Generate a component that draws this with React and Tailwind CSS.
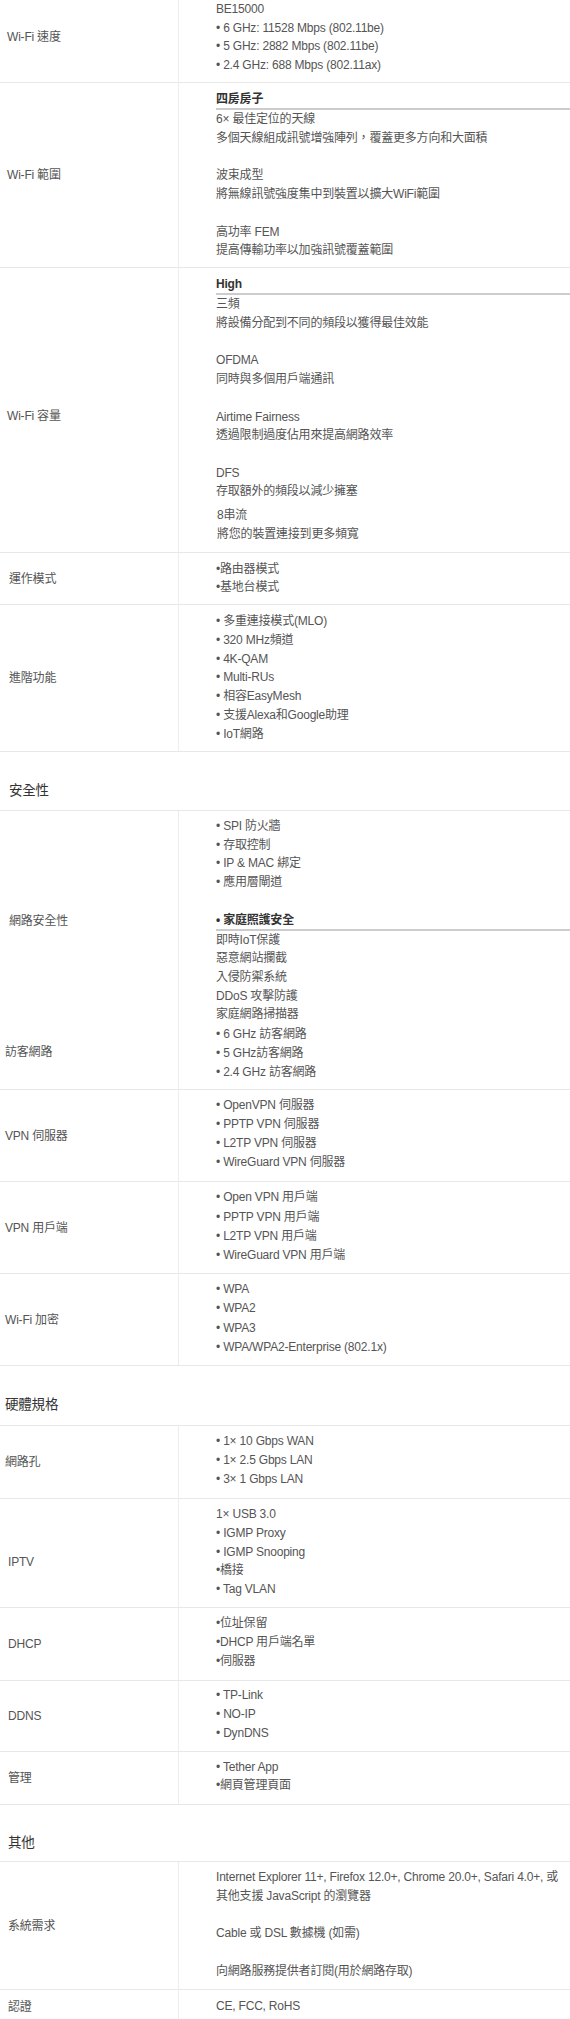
const rows = [
  {
    label: "Wi-Fi 速度",
    lpad: "pl-[7px]",
    pad: "pt-[8px] pb-[7.5px]",
    lh: "leading-[18.7px]",
    lines: [
      "BE15000",
      "• 6 GHz: 11528 Mbps (802.11be)",
      "• 5 GHz: 2882 Mbps (802.11be)",
      "• 2.4 GHz: 688 Mbps (802.11ax)",
    ],
  },
  {
    label: "Wi-Fi 範圍",
    lpad: "pl-[7px]",
    pad: "pt-[7px] pb-[7.4px]",
    lh: "leading-[18.7px]",
    lines: [
      { h: "四房房子" },
      "6× 最佳定位的天線",
      "多個天線組成訊號增強陣列，覆蓋更多方向和大面積",
      "",
      "波束成型",
      "將無線訊號強度集中到裝置以擴大WiFi範圍",
      "",
      "高功率 FEM",
      "提高傳輸功率以加強訊號覆蓋範圍",
    ],
  },
  {
    label: "Wi-Fi 容量",
    lpad: "pl-[7px] pt-[12px]",
    pad: "pt-[7px] pb-[8px]",
    lh: "leading-[18.7px]",
    lines: [
      { h: "High" },
      "三頻",
      "將設備分配到不同的頻段以獲得最佳效能",
      "",
      "OFDMA",
      "同時與多個用戶端通訊",
      "",
      "Airtime Fairness",
      "透過限制過度佔用來提高網路效率",
      "",
      "DFS",
      "存取額外的頻段以減少擁塞",
      { gap: true },
      { t: "8串流", shift: true },
      { t: "將您的裝置連接到更多頻寬", shift: true },
    ],
  },
  {
    label: "運作模式",
    lpad: "pl-[9px]",
    pad: "pt-[7px] pb-[7.2px]",
    lh: "leading-[18.7px]",
    lines: ["•路由器模式", "•基地台模式"],
  },
  {
    label: "進階功能",
    lpad: "pl-[9px]",
    pad: "pt-[7px] pb-[7.5px]",
    lh: "leading-[18.7px]",
    lines: [
      "• 多重連接模式(MLO)",
      "• 320 MHz頻道",
      "• 4K-QAM",
      "• Multi-RUs",
      "• 相容EasyMesh",
      "• 支援Alexa和Google助理",
      "• IoT網路",
    ],
  },
  { section: "安全性", spad: "pl-[9px] pt-[29px] pb-[9px]" },
  {
    label: "網路安全性",
    lpad: "pl-[9px] pt-[7px]",
    pad: "pt-[6.3px] pb-0",
    lh: "leading-[18.7px]",
    noBorder: true,
    lines: [
      "• SPI 防火牆",
      "• 存取控制",
      "• IP & MAC 綁定",
      "• 應用層閘道",
      "",
      { h: "• 家庭照護安全" },
      "即時IoT保護",
      "惡意網站攔截",
      "入侵防禦系統",
      "DDoS 攻擊防護",
      "家庭網路掃描器",
    ],
  },
  {
    label: "訪客網路",
    lpad: "pl-[5px] pb-[9px]",
    pad: "pt-[0.7px] pb-[7px]",
    lh: "leading-[19px]",
    lines: ["• 6 GHz 訪客網路", "• 5 GHz訪客網路", "• 2.4 GHz 訪客網路"],
  },
  {
    label: "VPN 伺服器",
    lpad: "pl-[5px]",
    pad: "pt-[6px] pb-[8.8px]",
    lh: "leading-[19.2px]",
    lines: [
      "• OpenVPN 伺服器",
      "• PPTP VPN 伺服器",
      "• L2TP VPN 伺服器",
      "• WireGuard VPN 伺服器",
    ],
  },
  {
    label: "VPN 用戶端",
    lpad: "pl-[5px]",
    pad: "pt-[6px] pb-[7.9px]",
    lh: "leading-[19.2px]",
    lines: [
      "• Open VPN 用戶端",
      "• PPTP VPN 用戶端",
      "• L2TP VPN 用戶端",
      "• WireGuard VPN 用戶端",
    ],
  },
  {
    label: "Wi-Fi 加密",
    lpad: "pl-[5px]",
    pad: "pt-[6px] pb-[8.5px]",
    lh: "leading-[19.2px]",
    lines: ["• WPA", "• WPA2", "• WPA3", "• WPA/WPA2-Enterprise (802.1x)"],
  },
  { section: "硬體規格", spad: "pl-[5px] pt-[29px] pb-[9.4px]" },
  {
    label: "網路孔",
    lpad: "pl-[5px]",
    pad: "pt-[6px] pb-[8.7px]",
    lh: "leading-[19.2px]",
    lines: ["• 1× 10 Gbps WAN", "• 1× 2.5 Gbps LAN", "• 3× 1 Gbps LAN"],
  },
  {
    label: "IPTV",
    lpad: "pl-[8px] pt-[18px]",
    pad: "pt-[6px] pb-[8.5px]",
    lh: "leading-[18.75px]",
    lines: ["1× USB 3.0", "• IGMP Proxy", "• IGMP Snooping", "•橋接", "• Tag VLAN"],
  },
  {
    label: "DHCP",
    lpad: "pl-[8px]",
    pad: "pt-[6px] pb-[8.4px]",
    lh: "leading-[19px]",
    lines: ["•位址保留", "•DHCP 用戶端名單", "•伺服器"],
  },
  {
    label: "DDNS",
    lpad: "pl-[8px]",
    pad: "pt-[5.5px] pb-[8.4px]",
    lh: "leading-[18.7px]",
    lines: ["• TP-Link", "• NO-IP", "• DynDNS"],
  },
  {
    label: "管理",
    lpad: "pl-[8px]",
    pad: "pt-[6px] pb-[8.6px]",
    lh: "leading-[18.7px]",
    lines: ["• Tether App", "•網頁管理頁面"],
  },
  { section: "其他", spad: "pl-[8px] pt-[28.3px] pb-[8.3px]" },
  {
    label: "系統需求",
    lpad: "pl-[8px]",
    pad: "pt-[6px] pb-[8.5px]",
    lh: "leading-[18.7px]",
    lines: [
      { t: "Internet Explorer 11+, Firefox 12.0+, Chrome 20.0+, Safari 4.0+, 或", nowrap: true },
      "其他支援 JavaScript 的瀏覽器",
      "",
      "Cable 或 DSL 數據機 (如需)",
      "",
      "向網路服務提供者訂閱(用於網路存取)",
    ],
  },
  {
    label: "認證",
    lpad: "pl-[8px]",
    pad: "pt-[7px] pb-[8px]",
    lh: "leading-[18.7px]",
    lines: ["CE, FCC, RoHS"],
  },
];

function Line({ item }) {
  if (item === "") return <div>&nbsp;</div>;
  if (typeof item === "string") return <div>{item}</div>;
  if (item.gap) return <div className="h-[5.3px]" />;
  if (item.h)
    return (
      <div className="font-bold text-[#333] leading-[18px] border-b-2 border-[#cccccc]">
        {item.h}
      </div>
    );
  return (
    <div className={(item.shift ? "pl-[1px] " : "") + (item.nowrap ? "whitespace-nowrap" : "")}>
      {item.t}
    </div>
  );
}

function SpecRow({ row }) {
  return (
    <div className={"flex " + (row.noBorder ? "" : "border-b border-[#e8e8e8]")}>
      <div className={"w-[179px] shrink-0 border-r border-[#ededed] flex items-center " + row.lpad}>
        {row.label}
      </div>
      <div className={"flex-1 min-w-0 pl-[37px] " + row.pad + " " + row.lh}>
        {row.lines.map((l, i) => (
          <Line key={i} item={l} />
        ))}
      </div>
    </div>
  );
}

export default function App() {
  return (
    <div
      className="w-[570px] bg-white text-[12px] tracking-[-0.2px] text-[#555] overflow-hidden"
      style={{ fontFamily: '"Liberation Sans", "Noto Sans CJK TC", sans-serif' }}
    >
      <div className="mt-[-8px]">
        {rows.map((row, i) =>
          row.section ? (
            <div
              key={i}
              className={"border-b border-[#e8e8e8] text-[13.5px] leading-[20px] text-[#333] " + row.spad}
            >
              {row.section}
            </div>
          ) : (
            <SpecRow key={i} row={row} />
          )
        )}
      </div>
    </div>
  );
}
